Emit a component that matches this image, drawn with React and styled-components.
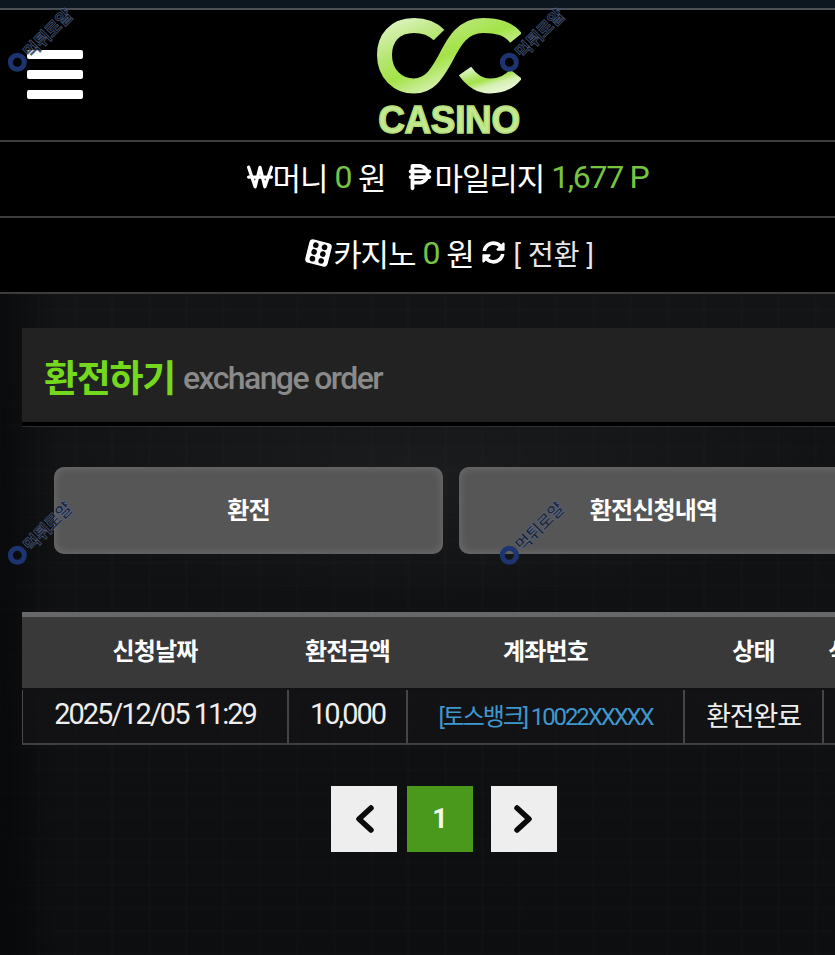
import React from "react";
import styled, { createGlobalStyle } from "styled-components";
import { FaWonSign, FaPesoSign } from "react-icons/fa6";
import { FaSyncAlt } from "react-icons/fa";

const GlobalStyle = createGlobalStyle`
  html, body { margin: 0; padding: 0; background: #0e0f11; overflow: hidden; }
  * { box-sizing: border-box; }
`;

const Viewport = styled.div`
  position: relative;
  width: 835px;
  height: 955px;
  overflow: hidden;
  font-family: Roboto, "Noto Sans CJK KR", sans-serif;
  color: #fff;
  background:
    radial-gradient(ellipse 420px 120px at 420px 480px, rgba(80, 80, 80, 0.16), transparent),
    linear-gradient(90deg, rgba(0, 0, 0, 0.45), transparent 60px),
    repeating-linear-gradient(90deg, rgba(255, 255, 255, 0.007) 0 3px, transparent 3px 37px),
    repeating-linear-gradient(0deg, rgba(255, 255, 255, 0.006) 0 2px, transparent 2px 23px),
    linear-gradient(180deg, #131416 300px, #101113 620px, #0d0e10 100%);
`;

const Page = styled.div`
  width: 898px;
`;

const TopStrip = styled.div`
  height: 10px;
  background: #0d1720;
  border-bottom: 2px solid #4a5054;
`;

const Header = styled.header`
  height: 130px;
  background: #000;
  display: flex;
  justify-content: center;
  align-items: flex-start;
  position: relative;
`;

const MenuButton = styled.div`
  position: absolute;
  left: 27px;
  top: 40px;
  width: 56px;
  display: flex;
  flex-direction: column;
  gap: 11px;
`;

const MenuBar = styled.span`
  display: block;
  height: 9px;
  background: #fff;
  border-radius: 2px;
`;

const Logo = styled.div`
  margin-top: 8px;
  width: 144px;
  display: flex;
  flex-direction: column;
  align-items: center;
`;

const LogoMark = styled.svg`
  display: block;
  width: 144px;
  height: 76px;
`;

const LogoText = styled.span`
  margin-top: 11px;
  font-family: "Liberation Sans", sans-serif;
  font-weight: 700;
  font-size: 38px;
  line-height: 30px;
  letter-spacing: -0.3px;
  transform: scaleX(0.97);
  color: #c4e992;
  -webkit-text-stroke: 1.6px #b4df78;
  white-space: nowrap;
`;

const InfoRow = styled.div`
  height: 76px;
  background: #000;
  border-top: 2px solid #3c3c3c;
  display: flex;
  align-items: center;
  justify-content: center;
  padding-bottom: 5px;
  padding-left: ${(p) => p.$shift || 0}px;
  font-size: 31px;
  font-weight: 400;
  letter-spacing: -1.1px;
  white-space: nowrap;
`;

const Chunk = styled.span`
  display: inline-flex;
  align-items: center;
  margin-left: ${(p) => p.$gap || 0}px;
`;

const Icon = styled.span`
  display: inline-flex;
  align-items: center;
  font-size: ${(p) => p.$size}px;
  margin-left: ${(p) => p.$left || 0}px;
`;

const Green = styled.span`
  color: #76c442;
  font-size: 32px;
  letter-spacing: -1.3px;
  margin: 0 7px;
`;

const Swap = styled.span`
  font-size: 28px;
  letter-spacing: 0;
  margin-left: 9px;
  color: #e6e6e6;
`;

const InfoEnd = styled.div`
  height: 2px;
  background: #3c3c3c;
`;

const Content = styled.main`
  padding: 34px 22px 0;
`;

const TitleBar = styled.div`
  height: 94px;
  background: #222;
  display: flex;
  align-items: center;
  padding: 2px 0 0 22px;
  gap: 8px;
`;

const TitleRule = styled.div`
  height: 5px;
  background: #000;
  border-bottom: 1px solid #2f2f2f;
`;

const Title = styled.h2`
  margin: 0;
  font-size: 37px;
  font-weight: 700;
  letter-spacing: -1.3px;
  color: #74d81c;
`;

const SubTitle = styled.span`
  font-size: 32px;
  font-weight: 500;
  letter-spacing: -1.6px;
  color: #8a8a8a;
  margin-top: 4px;
`;

const Tabs = styled.div`
  display: flex;
  gap: 16px;
  padding: 40px 0 0 32px;
`;

const Tab = styled.div`
  width: 389px;
  height: 87px;
  border-radius: 10px;
  background: #565656;
  box-shadow: inset 0 0 9px 1px rgba(125, 125, 125, 0.6);
  display: flex;
  align-items: center;
  justify-content: center;
  font-size: 24px;
  font-weight: 700;
  letter-spacing: -0.8px;
  padding-bottom: 4px;
`;

const columns = "266px 119px 277px 139px 53px";

const Table = styled.div`
  margin-top: 58px;
`;

const HeadRow = styled.div`
  display: grid;
  grid-template-columns: ${columns};
  height: 78px;
  background: #393939;
  border-top: 5px solid #686868;
  border-bottom: 2px solid #111;
`;

const HeadCell = styled.div`
  display: flex;
  align-items: center;
  justify-content: center;
  padding-bottom: 6px;
  font-size: 24px;
  font-weight: 700;
  letter-spacing: -0.8px;
  white-space: nowrap;
`;

const BodyRow = styled.div`
  display: grid;
  grid-template-columns: ${columns};
  height: 55px;
  border-bottom: 2px solid #3f4042;
  border-left: 1px solid #4a4a4a;
  background: rgba(20, 20, 22, 0.7);
`;

const BodyCell = styled.div`
  display: flex;
  align-items: center;
  justify-content: center;
  padding-bottom: 5px;
  border-right: 2px solid #454545;
  font-size: 29px;
  font-weight: 400;
  letter-spacing: -2px;
  color: ${(p) => p.$color || "#eee"};
  white-space: nowrap;
`;

const StatusCell = styled(BodyCell)`
  font-size: 27px;
  letter-spacing: -1.2px;
`;

const BankCell = styled(BodyCell)`
  font-size: 24px;
  letter-spacing: -2.1px;
`;

const Pager = styled.div`
  display: flex;
  justify-content: center;
  gap: 10px;
  margin-top: 41px;
  padding-right: 10px;
`;

const PageButton = styled.div`
  width: 66px;
  height: 66px;
  display: flex;
  align-items: center;
  justify-content: center;
  background: ${(p) => (p.$active ? "#4a981c" : "#eeeeee")};
  color: ${(p) => (p.$active ? "#f2f7ee" : "#0a0a0a")};
  margin-left: ${(p) => p.$offset || 0}px;
  font-size: 27px;
  font-weight: 700;
  padding-bottom: ${(p) => (p.$active ? 1 : 0)}px;
`;

const Watermark = styled.div`
  position: absolute;
  left: ${(p) => p.$x}px;
  top: ${(p) => p.$y}px;
  width: 84px;
  height: 24px;
  display: flex;
  align-items: center;
  gap: 2px;
  transform: rotate(-45deg);
  transform-origin: center;
  pointer-events: none;
`;

const WatermarkRing = styled.span`
  width: 19px;
  height: 19px;
  border-radius: 50%;
  border: 5px solid #1c3570;
  flex: none;
`;

const WatermarkText = styled.span`
  font-size: 17px;
  font-weight: 700;
  letter-spacing: -0.6px;
  white-space: nowrap;
  color: rgba(15, 18, 30, 0.8);
  -webkit-text-stroke: 0.7px rgba(95, 115, 155, 0.75);
`;

function Chevron({ flip }) {
  const points = flip ? "4,4 16,15 4,26" : "18,4 6,15 18,26";
  return (
    <svg width="22" height="30" viewBox="0 0 22 30">
      <polyline
        points={points}
        fill="none"
        stroke="#0a0a0a"
        strokeWidth="5.500"
        strokeLinecap="round"
        strokeLinejoin="round"
      />
    </svg>
  );
}

function CasinoLogo() {
  return (
    <LogoMark viewBox="0 0 144 76">
      <defs>
        <linearGradient id="lg" x1="0" y1="0" x2="1" y2="1">
          <stop offset="0" stopColor="#dcf3bd" />
          <stop offset="0.28" stopColor="#b5e671" />
          <stop offset="0.48" stopColor="#a3e347" />
          <stop offset="0.72" stopColor="#d6f0b2" />
          <stop offset="1" stopColor="#e6f6d0" />
        </linearGradient>
      </defs>
      <path
        d="M62 17 C54 9 46 7.500 37 7.500 C17 7.500 7.500 21 7.500 37 C7.500 56 21 68 37 68 C52 68 59 57 67 43 C76 26 84 7.500 106 7.500 C120 7.500 131 10 139 20"
        fill="none"
        stroke="url(#lg)"
        strokeWidth="15"
      />
      <path
        d="M88 53 C95 63 103 68 113 68 C123 68 132 65 139 56"
        fill="none"
        stroke="url(#lg)"
        strokeWidth="15"
      />
    </LogoMark>
  );
}

function DiceIcon() {
  return (
    <svg width="29" height="28" viewBox="0 0 29 28" style={{ transform: "rotate(14deg)" }}>
      <rect x="3" y="2" width="23" height="24" rx="4" fill="#fff" />
      {[7, 14, 21].map((y) =>
        [10, 19].map((x) => <circle key={x + "-" + y} cx={x} cy={y} r="2.800" fill="#000" />)
      )}
    </svg>
  );
}

const marks = [
  [-2, 27],
  [490, 27],
  [-2, 520],
  [490, 520],
];

export default function App() {
  return (
    <Viewport>
      <GlobalStyle />
      <Page>
        <TopStrip />
        <Header>
          <MenuButton>
            <MenuBar />
            <MenuBar />
            <MenuBar />
          </MenuButton>
          <Logo>
            <CasinoLogo />
            <LogoText>CASINO</LogoText>
          </Logo>
        </Header>
        <InfoRow $shift={4}>
          <Chunk>
            <Icon $size={26}>
              <FaWonSign />
            </Icon>
            머니<Green>0</Green>원
          </Chunk>
          <Chunk $gap={19}>
            <Icon $size={30}>
              <FaPesoSign />
            </Icon>
            마일리지<Green>1,677 P</Green>
          </Chunk>
        </InfoRow>
        <InfoRow>
          <Chunk>
            <Icon $size={28}>
              <DiceIcon />
            </Icon>
            카지노<Green>0</Green>원
            <Icon $size={23} $left={8}>
              <FaSyncAlt />
            </Icon>
            <Swap>[ 전환 ]</Swap>
          </Chunk>
        </InfoRow>
        <InfoEnd />
        <Content>
          <TitleBar>
            <Title>환전하기</Title>
            <SubTitle>exchange order</SubTitle>
          </TitleBar>
          <TitleRule />
          <Tabs>
            <Tab>환전</Tab>
            <Tab>환전신청내역</Tab>
          </Tabs>
          <Table>
            <HeadRow>
              <HeadCell>신청날짜</HeadCell>
              <HeadCell>환전금액</HeadCell>
              <HeadCell>계좌번호</HeadCell>
              <HeadCell>상태</HeadCell>
              <HeadCell>삭제</HeadCell>
            </HeadRow>
            <BodyRow>
              <BodyCell>2025/12/05 11:29</BodyCell>
              <BodyCell>10,000</BodyCell>
              <BankCell $color="#3f97cf">[토스뱅크] 10022XXXXX</BankCell>
              <StatusCell>환전완료</StatusCell>
              <BodyCell />
            </BodyRow>
          </Table>
          <Pager>
            <PageButton>
              <Chevron />
            </PageButton>
            <PageButton $active>1</PageButton>
            <PageButton $offset={8}>
              <Chevron flip />
            </PageButton>
          </Pager>
        </Content>
      </Page>
      {marks.map(([x, y]) => (
        <Watermark key={x + "-" + y} $x={x} $y={y}>
          <WatermarkRing />
          <WatermarkText>먹튀로얄</WatermarkText>
        </Watermark>
      ))}
    </Viewport>
  );
}
